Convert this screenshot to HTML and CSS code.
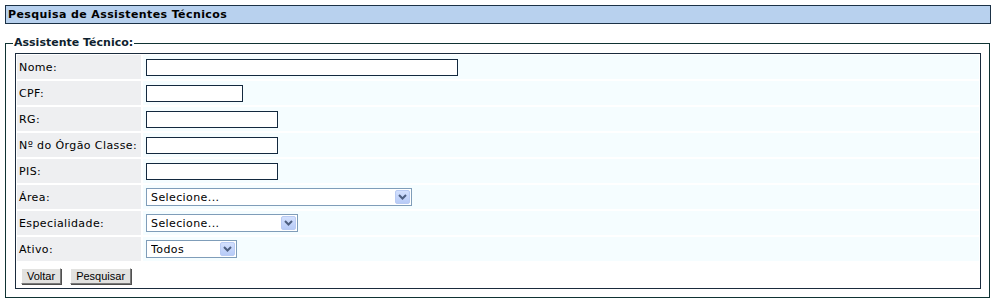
FILE: index.html
```html
<!DOCTYPE html>
<html lang="pt-BR">
  <head>
    <meta charset="UTF-8">
    <title>Pesquisa de Assistentes Técnicos</title>
    <link rel="stylesheet" href="styles.css">
  </head>
  <body>

    <div class="titulo">Pesquisa de Assistentes Técnicos</div>

    <fieldset class="grupo">
      <legend>Assistente Técnico:</legend>

      <div class="form-box">
        <label class="rotulo" for="nome">Nome:</label>
        <div class="campo"><input type="text" id="nome" class="txt txt-lg"></div>

        <label class="rotulo" for="cpf">CPF:</label>
        <div class="campo"><input type="text" id="cpf" class="txt txt-sm"></div>

        <label class="rotulo" for="rg">RG:</label>
        <div class="campo"><input type="text" id="rg" class="txt txt-md"></div>

        <label class="rotulo" for="orgao">Nº do Órgão Classe:</label>
        <div class="campo"><input type="text" id="orgao" class="txt txt-md"></div>

        <label class="rotulo" for="pis">PIS:</label>
        <div class="campo"><input type="text" id="pis" class="txt txt-md"></div>

        <label class="rotulo" for="area">Área:</label>
        <div class="campo">
          <span class="combo combo-lg">
            <select id="area"><option>Selecione...</option></select>
            <span class="seta"><svg width="9" height="6" viewBox="0 0 9 6"><path d="M1 1 L4.5 4.5 L8 1" fill="none" stroke="#4d5f80" stroke-width="2"/></svg></span>
          </span>
        </div>

        <label class="rotulo" for="esp">Especialidade:</label>
        <div class="campo">
          <span class="combo combo-md">
            <select id="esp"><option>Selecione...</option></select>
            <span class="seta"><svg width="9" height="6" viewBox="0 0 9 6"><path d="M1 1 L4.5 4.5 L8 1" fill="none" stroke="#4d5f80" stroke-width="2"/></svg></span>
          </span>
        </div>

        <label class="rotulo" for="ativo">Ativo:</label>
        <div class="campo">
          <span class="combo combo-sm">
            <select id="ativo"><option>Todos</option></select>
            <span class="seta"><svg width="9" height="6" viewBox="0 0 9 6"><path d="M1 1 L4.5 4.5 L8 1" fill="none" stroke="#4d5f80" stroke-width="2"/></svg></span>
          </span>
        </div>

        <div class="botoes">
          <button type="button">Voltar</button>
          <button type="button">Pesquisar</button>
        </div>
      </div>
    </fieldset>

  </body>
</html>
```

FILE: styles.css
```css
* { box-sizing: border-box; }

body {
	margin: 0;
	padding: 5px 4px 5px 5px;
	background-color: #FFFFFF;
	font-family: 'DejaVu Sans', Verdana, sans-serif;
	font-size: 11px;
	letter-spacing: 0.4px; /* Verdana e um pouco mais larga que a DejaVu */
	color: #000;
}

/* Barra de titulo */
.titulo {
	height: 19px;
	padding: 1px 2px;
	border: 1px solid #1b3146;
	background-color: #b8d1ee;
	font-weight: bold;
	line-height: 15px;
}

.grupo {
	margin: 12px 1px 0 0;
	padding: 3px 8px 8px 9px;
	border: 1px solid #0f3333;
}

.grupo legend {
	margin-left: -2px;
	padding: 0 1px;
	font-weight: bold;
	font-size: 11px;
	line-height: 14px;
	letter-spacing: 0;
	color: #0f1f2f;
}

/* Tabela do formulario */
.form-box {
	display: grid;
	grid-template-columns: 124px 1fr;
	grid-auto-rows: 24px;
	gap: 2px;
	padding: 1px;
	border: 1px solid #1a2b3d;
	background-color: #FFFFFF;
}

.rotulo {
	display: flex;
	align-items: center;
	padding-left: 2px;
	background-color: #eeeff1;
}

.campo {
	display: flex;
	align-items: center;
	padding-left: 3px;
	background-color: #f5fdff;
}

.txt {
	height: 17px;
	border: 1px solid #13293f;
	background-color: #FFF;
	font-family: inherit;
	font-size: 11px;
}

.txt-lg { width: 312px; }
.txt-md { width: 132px; }
.txt-sm { width: 97px; }

/* Combos no estilo antigo do windows */
.combo {
	position: relative;
	display: inline-block;
	height: 18px;
}

.combo select {
	appearance: none;
	-webkit-appearance: none;
	width: 100%;
	height: 18px;
	padding: 0 0 0 4px;
	border: 1px solid #7f9db9;
	border-radius: 0;
	background-color: #FFF;
	font-family: inherit;
	font-size: 11px;
	letter-spacing: 0.4px;
	color: #000;
}

.combo .seta {
	position: absolute;
	top: 2px;
	right: 2px;
	width: 15px;
	height: 14px;
	display: flex;
	align-items: center;
	justify-content: center;
	border-radius: 2px;
	background: linear-gradient(#d3e0fd, #b7cbf7);
	border: 1px solid #b9cbf3;
	pointer-events: none;
}

.combo-lg { width: 266px; }
.combo-md { width: 152px; }
.combo-sm { width: 91px; }

.botoes {
	grid-column: 1 / -1;
	display: flex;
	align-items: flex-start;
	gap: 9px;
	padding: 5px 0 0 4px;
}

button {
	height: 16px;
	padding: 0 5px;
	border: 1px solid;
	border-color: #ffffff #7a7a7a #7a7a7a #ffffff;
	box-shadow: 1px 1px 0 #505050;
	background-color: #e2e2e0;
	font-family: 'Liberation Sans', Tahoma, sans-serif;
	font-size: 11px;
	line-height: 14px;
	letter-spacing: 0;
	color: #000;
	cursor: pointer;
}
```
